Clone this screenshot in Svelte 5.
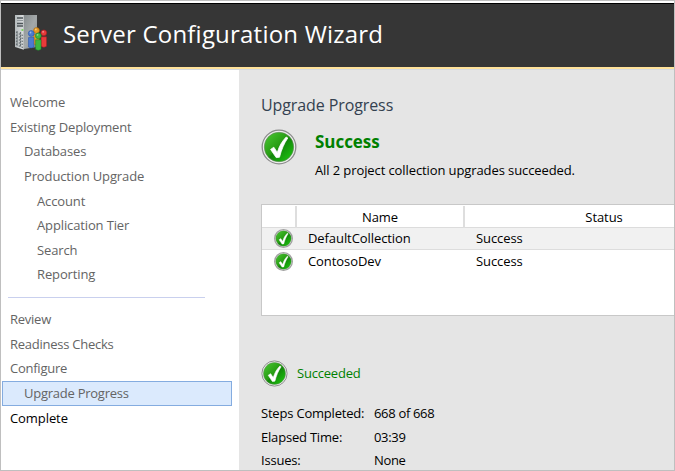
<script>
  const steps = [
    { label: 'Welcome', level: 0 },
    { label: 'Existing Deployment', level: 0 },
    { label: 'Databases', level: 1 },
    { label: 'Production Upgrade', level: 1 },
    { label: 'Account', level: 2 },
    { label: 'Application Tier', level: 2 },
    { label: 'Search', level: 2 },
    { label: 'Reporting', level: 2 }
  ];
  const stages = [
    { label: 'Review', level: 0 },
    { label: 'Readiness Checks', level: 0 },
    { label: 'Configure', level: 0 },
    { label: 'Upgrade Progress', level: 1, current: true },
    { label: 'Complete', level: 0, next: true }
  ];
  const collections = ['DefaultCollection', 'ContosoDev'];
  const people = [
    { x: 22.5, y: 16.5, c: '#e89a20', d: '#a8660c' },
    { x: 17.2, y: 19.5, c: '#4d7bd0', d: '#2450a8' },
    { x: 29.8, y: 18.8, c: '#e83a3a', d: '#a81820' },
    { x: 24.3, y: 21.8, c: '#3cb840', d: '#168828' }
  ];
</script>

{#snippet check(size)}
  <svg class="check" width={size} height={size} viewBox="0 0 36 36" aria-hidden="true">
    <defs>
      <linearGradient id="green{size}" x1="0" y1="0" x2="1" y2="1">
        <stop offset="0" stop-color="#4dcb35" />
        <stop offset=".48" stop-color="#269b12" />
        <stop offset=".52" stop-color="#12850a" />
        <stop offset="1" stop-color="#20d010" />
      </linearGradient>
    </defs>
    <circle cx="18" cy="18" r="16.800" fill="#eeeeee" stroke={size < 20 ? '#a0a0a0' : '#8c8c8c'} stroke-width={size < 20 ? 2.4 : 1.3} />
    <circle cx="18" cy="18" r="14.700" fill="url(#green{size})" stroke="#63835d" stroke-width=".6" />
    <path d="M9.6 20.4l3.2-2.200 3.500 5.200C18.200 17 21.300 12 25.200 8l1.600 1C23 14.600 20.500 20.500 18.500 28.200l-3.300.4Z" fill="#fff" stroke="#fff" stroke-width=".8" stroke-linejoin="round" />
  </svg>
{/snippet}

{#snippet item(s)}
  <li class="level{s.level}" class:current={s.current} class:next={s.next}>{s.label}</li>
{/snippet}

<div class="window">
  <header>
    <svg class="logo" width="34" height="38" viewBox="0 0 34 38" aria-hidden="true">
      <defs>
        <linearGradient id="side" x1="0" y1="0" x2="1" y2="1">
          <stop offset="0" stop-color="#858b8d" /><stop offset=".5" stop-color="#a4a9aa" /><stop offset="1" stop-color="#82888a" />
        </linearGradient>
        <linearGradient id="front"><stop offset="0" stop-color="#b4babc" /><stop offset="1" stop-color="#dde0e1" /></linearGradient>
      </defs>
      <path d="M9.500 1H23v32l-13 2Z" fill="url(#side)" />
      <path d="M1 1h8.800v34.800L1 33Z" fill="url(#front)" />
      <path d="M3 4h6M3 9.500h6M3 12h6" stroke="#4e565a" stroke-width="1.500" />
      <path d="M3 6.500h6" stroke="#92999c" />
      <path d="M7.500 16h1.800" stroke="#61d335" stroke-width="1.500" />
      <path d="M2 18.500l7 3M2 21.500l7 3M2 24.500l7 3M2 27.500l7 3M2 30.500l7 3M3 17v15M6.500 18v15" stroke="#697175" stroke-width="1.200" stroke-dasharray="2 1" />
      {#each people as p}
        <path d="M{p.x - 2.7} {p.y + 4}h5.400v9.500q-2.700 2-5.400 0Z" fill={p.c} stroke={p.d} stroke-width=".5" />
        <circle cx={p.x} cy={p.y} r="2.900" fill={p.c} stroke={p.d} stroke-width=".6" />
        <circle cx={p.x - .7} cy={p.y - 1} r=".9" fill="#fff" opacity=".45" />
      {/each}
    </svg>
    <h1>Server Configuration Wizard</h1>
  </header>

  <div class="body">
    <nav>
      <ul>{#each steps as s}{@render item(s)}{/each}</ul>
      <hr />
      <ul class="stages">{#each stages as s}{@render item(s)}{/each}</ul>
    </nav>

    <main>
      <h2>Upgrade Progress</h2>
      <section class="summary">
        {@render check(36)}
        <div>
          <h3>Success</h3>
          <p>All 2 project collection upgrades succeeded.</p>
        </div>
      </section>

      <div class="table">
        <div class="row head"><span></span><span>Name</span><span>Status</span></div>
        {#each collections as name, i}
          <div class="row entry" class:selected={i === 0}>
            <span>{@render check(19)}</span><span class="name">{name}</span><span class="status">Success</span>
          </div>
        {/each}
      </div>

      <div class="result">{@render check(27)}<span>Succeeded</span></div>
      <dl>
        <dt>Steps Completed:</dt><dd>668 of 668</dd>
        <dt>Elapsed Time:</dt><dd>03:39</dd>
        <dt>Issues:</dt><dd>None</dd>
      </dl>
    </main>
  </div>
</div>

<style>
  :global(body) { margin: 0; overflow: hidden; }
  * { box-sizing: border-box; }
  h1, h2, h3, p, ul, dl, dd { margin: 0; padding: 0; font-weight: 400; }
  ul { list-style: none; }
  .window {
    width: 675px; height: 471px; overflow: hidden;
    border: 1px solid #bfbfbf; background: #fff;
    display: flex; flex-direction: column;
    font: 13px/20px "Open Sans", "Noto Sans", sans-serif;
    letter-spacing: -.2px; color: #000; white-space: nowrap;
  }
  header {
    flex: none; height: 66px; margin-top: 2px; padding-left: 13px;
    display: flex; align-items: flex-start;
    background: #363636; border-top: 1px solid #000; border-bottom: 2px solid #ffe29b;
  }
  .logo { margin-top: 10px; flex: none; }
  h1 { margin: 12px 0 0 15px; font-size: 24px; line-height: 36px; letter-spacing: .21px; color: #fff; }
  .body { flex: 1; min-height: 0; display: flex; border-top: 1px solid #d5dbe3; }
  nav { width: 238px; flex: none; padding-top: 20px; background: #fff; color: #646464; letter-spacing: -.13px; }
  .stages { letter-spacing: -.25px; }
  li { height: 24.65px; line-height: 24px; padding-left: 9px; }
  .level1 { padding-left: 23px; }
  .level2 { padding-left: 36px; }
  hr { width: 197px; height: 1px; margin: 10px 0 9px 7px; border: 0; background: #c9d0ee; }
  li.current { width: 230px; margin-left: 1px; padding-left: 21px; line-height: 23px; border: 1px solid #84ace0; background: #dbeafd; }
  li.next { color: #000; letter-spacing: -.08px; }
  main { flex: 1; min-width: 0; overflow: hidden; padding: 22px 0 0 22px; background: #e5e5e5; }
  h2 { font-size: 16px; line-height: 26px; letter-spacing: -.1px; color: #344150; }
  .check { display: block; flex: none; }
  .summary { display: flex; gap: 18px; height: 68px; margin-top: 11px; }
  h3 { font-size: 17px; line-height: 26px; font-weight: 700; letter-spacing: -.05px; color: #008000; }
  .summary p { margin-top: 5px; letter-spacing: -.1px; }
  .table { width: 482px; height: 112px; border: 1px solid #c8c8c8; background: #fff; padding-top: 1px; margin-top: 7px; letter-spacing: -.08px; }
  .row { display: grid; grid-template-columns: 35px 168px 280px; }
  .head { height: 22px; line-height: 22px; text-align: center; border-bottom: 1px solid #dcdcdc; }
  .head span { border-right: 2px solid #dedede; }
  .entry { height: 22px; line-height: 21px; align-items: center; }
  .entry .check { margin-left: 12px; }
  .selected { background: #f1f1f1; border-bottom: 1px solid #ddd; }
  .name, .status { padding-left: 11px; }
  .result { display: flex; align-items: center; gap: 9px; height: 28px; margin-top: 43px; color: #008000; }
  dl { display: grid; grid-template-columns: 113px 1fr; grid-auto-rows: 23.6px; margin-top: 15px; line-height: 23px; }
  dd { letter-spacing: -.32px; }
</style>
